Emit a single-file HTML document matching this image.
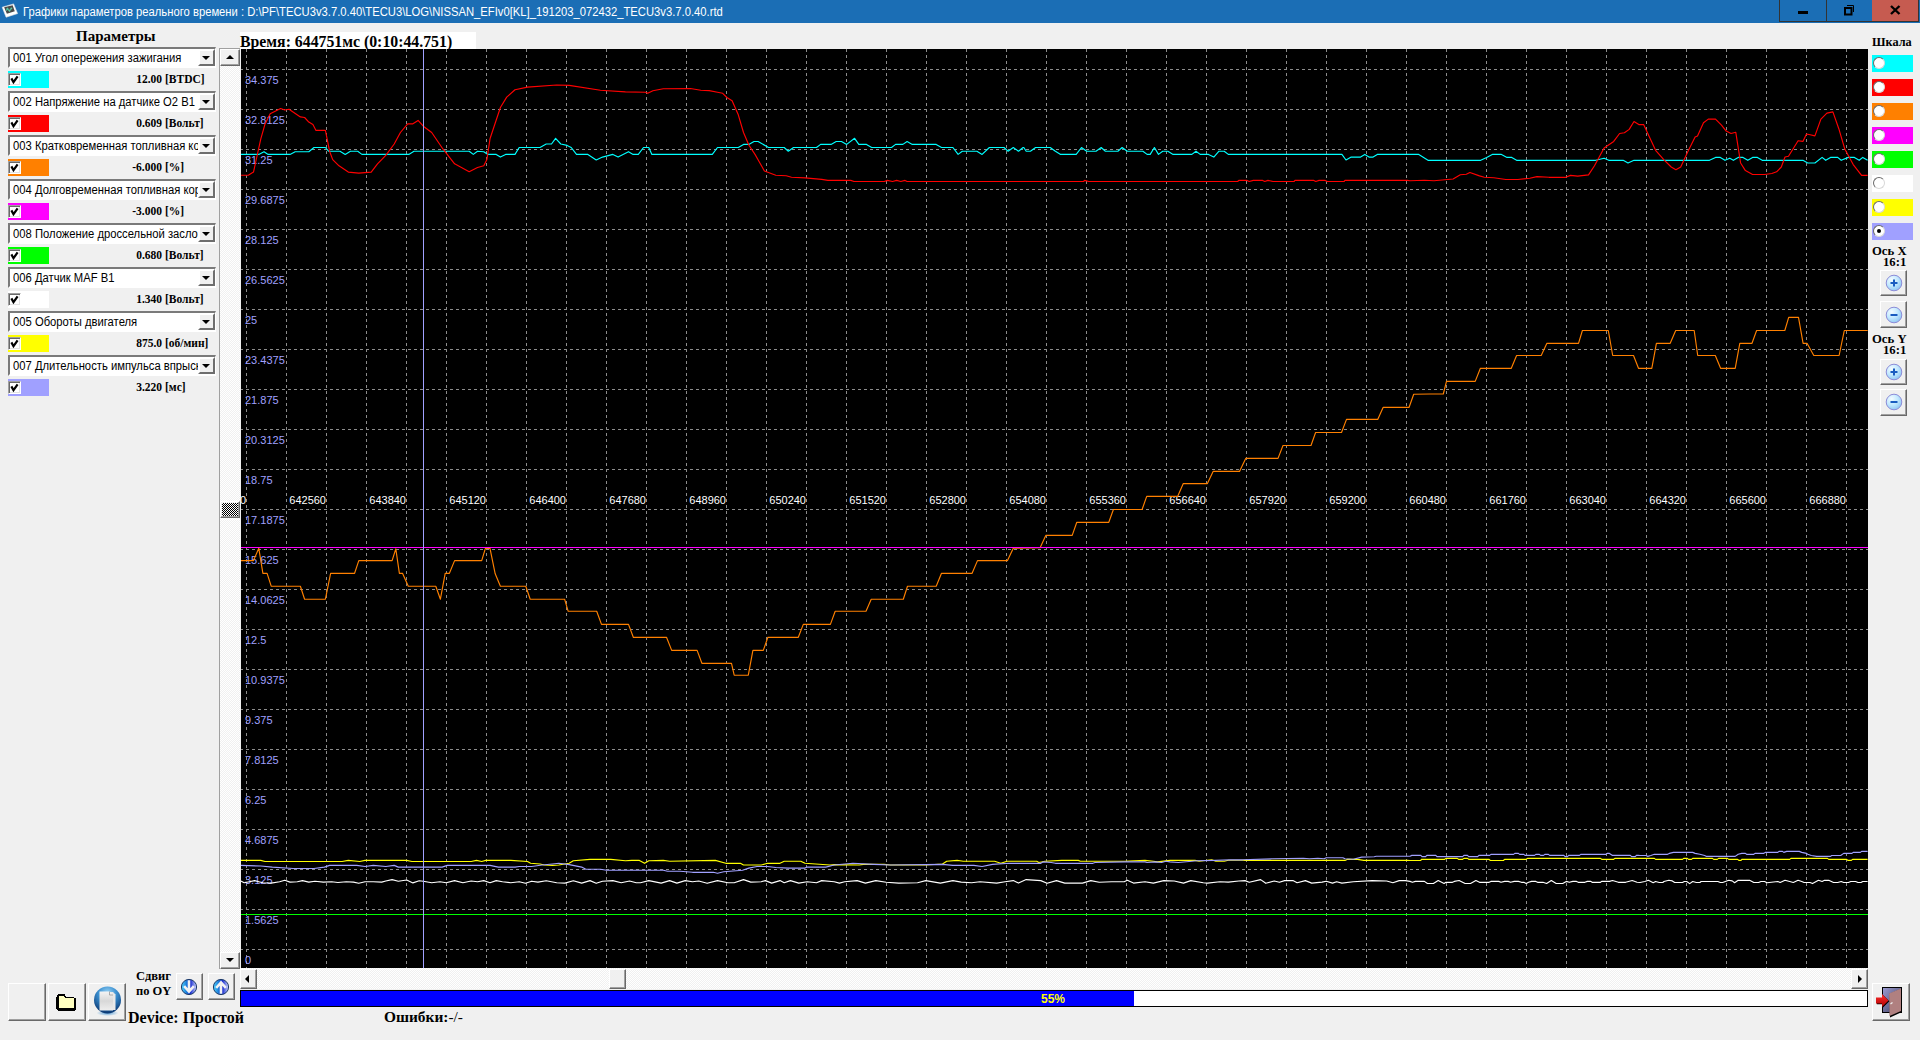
<!DOCTYPE html>
<html><head><meta charset="utf-8">
<style>
*{margin:0;padding:0;box-sizing:border-box}
html,body{width:1920px;height:1040px;overflow:hidden;background:#f0f0f0;position:relative;font-family:"Liberation Sans",sans-serif}
.a{position:absolute}
.t{position:absolute;white-space:nowrap;line-height:1}
.serif{font-family:"Liberation Serif",serif;font-weight:bold;color:#000}
#title{left:0;top:0;width:1920px;height:23px;background:#1b6eb5}
.wb{position:absolute;top:0;height:22px;border:1px solid #333;border-top:none}
.combo{position:absolute;left:8px;width:208px;height:21px;background:#fff;border-top:2px solid #7a7a7a;border-left:2px solid #7a7a7a;border-bottom:2px solid #fff;border-right:1px solid #fff;overflow:hidden}
.combo span{position:absolute;left:3px;top:2.5px;font-size:12px;line-height:13px;color:#000;white-space:nowrap;transform:scaleX(0.937);transform-origin:0 0}
.dd{position:absolute;left:188px;top:0;width:17px;height:17px;background:#f0f0f0;border-left:2px solid #fff;border-top:2px solid #fff;border-right:2px solid #6e6e6e;border-bottom:2px solid #6e6e6e}
.dd:after{content:"";position:absolute;left:2px;top:5px;border-left:4px solid transparent;border-right:4px solid transparent;border-top:4px solid #000}
.sw{position:absolute;left:8px;width:41px;height:17px}
.cb{position:absolute;left:8px;width:13px;height:13px;background:#fff;border-top:1px solid #a0a0a0;border-left:1px solid #a0a0a0;border-right:1px solid #fff;border-bottom:1px solid #fff;box-shadow:inset 1px 1px 0 #696969,inset -1px -1px 0 #e3e3e3}
.val{position:absolute;font-family:"Liberation Serif",serif;font-weight:bold;font-size:11.5px;line-height:1;white-space:nowrap;color:#000}
.btn{position:absolute;background:#f0f0f0;border-top:1px solid #fff;border-left:1px solid #fff;border-right:1px solid #696969;border-bottom:1px solid #696969;box-shadow:inset -1px -1px 0 #a0a0a0}
.track{background:repeating-conic-gradient(#f0f0f0 0 25%,#fff 0 50%) 0 0/2px 2px}
.rsw{position:absolute;left:1872px;width:41px;height:17px}
.rad{position:absolute;left:1px;top:2px;width:12px;height:12px;border-radius:50%;background:#fff;border:1.5px solid #6a6a6a;border-right-color:#d8d8d8;border-bottom-color:#d8d8d8}
</style></head><body>
<!-- title bar -->
<div id="title" class="a">
  <svg class="a" style="left:0;top:0" width="22" height="22" viewBox="0 0 22 22">
<path d="M2.2 7.2 L13.6 3.9 L17.6 13.6 L6.1 17.2 Z" fill="#fff" stroke="#e6e6e6" stroke-width="0.6" stroke-linejoin="round"/>
<path d="M4.1 7.3 L12.6 5.2 L14.8 11.2 L6.9 13.7 Z" fill="#4a4a4a"/>
<path d="M6.2 10.6 L7.4 8.6 L9.4 10.8 L11.6 8.2" stroke="#4fb89a" stroke-width="1.2" fill="none"/>
<circle cx="7.4" cy="8.6" r="0.9" fill="#5cc8a8"/><circle cx="9.5" cy="10.6" r="0.9" fill="#5cc8a8"/><circle cx="11.4" cy="8.3" r="0.9" fill="#5cc8a8"/>
</svg>
  <div class="t" style="left:23px;top:6px;font-size:12px;color:#fff;transform:scaleX(0.937);transform-origin:0 0">Графики параметров реального времени : D:\PF\TECU3v3.7.0.40\TECU3\LOG\NISSAN_EFIv0[KL]_191203_072432_TECU3v3.7.0.40.rtd</div>
  <div class="wb" style="left:1779px;width:48px"><div class="a" style="left:18px;top:11px;width:10px;height:3px;background:#000"></div></div>
  <div class="wb" style="left:1826px;width:47px;border-left:none"><svg class="a" style="left:17px;top:5px" width="14" height="12"><rect x="2" y="3" width="6.5" height="6.5" fill="none" stroke="#000" stroke-width="2"/><path d="M4 0.5 H10.5 V7" fill="none" stroke="#000" stroke-width="1"/></svg></div>
  <div class="wb" style="left:1872px;width:47px;background:#c65b50;border-left:none"><svg class="a" style="left:18px;top:5px" width="11" height="10"><path d="M1 1 L9.5 9 M9.5 1 L1 9" stroke="#000" stroke-width="2.4"/></svg></div>
</div>

<!-- left panel -->
<div class="t serif" style="left:76px;top:29px;font-size:15px">Параметры</div>
<div class="combo" style="top:47px"><span>001 Угол опережения зажигания</span><div class="dd"></div></div>
<div class="sw" style="top:71px;background:#00ffff"></div>
<div class="cb" style="top:73px"><svg class="a" style="left:0;top:0" width="11" height="11"><path d="M2.4 4.4 L4.5 8.2 L8.6 2.4" stroke="#000" stroke-width="2.2" fill="none" stroke-linejoin="miter"/></svg></div>
<div class="val" style="top:74px;right:1758px">12.00</div>
<div class="val" style="top:74px;left:165px">[BTDC]</div>
<div class="combo" style="top:91px"><span>002 Напряжение на датчике O2 B1 S</span><div class="dd"></div></div>
<div class="sw" style="top:115px;background:#ff0000"></div>
<div class="cb" style="top:117px"><svg class="a" style="left:0;top:0" width="11" height="11"><path d="M2.4 4.4 L4.5 8.2 L8.6 2.4" stroke="#000" stroke-width="2.2" fill="none" stroke-linejoin="miter"/></svg></div>
<div class="val" style="top:118px;right:1758px">0.609</div>
<div class="val" style="top:118px;left:165px">[Вольт]</div>
<div class="combo" style="top:135px"><span>003 Кратковременная топливная ко</span><div class="dd"></div></div>
<div class="sw" style="top:159px;background:#ff8000"></div>
<div class="cb" style="top:161px"><svg class="a" style="left:0;top:0" width="11" height="11"><path d="M2.4 4.4 L4.5 8.2 L8.6 2.4" stroke="#000" stroke-width="2.2" fill="none" stroke-linejoin="miter"/></svg></div>
<div class="val" style="top:162px;right:1758px">-6.000</div>
<div class="val" style="top:162px;left:165px">[%]</div>
<div class="combo" style="top:179px"><span>004 Долговременная топливная кор</span><div class="dd"></div></div>
<div class="sw" style="top:203px;background:#ff00ff"></div>
<div class="cb" style="top:205px"><svg class="a" style="left:0;top:0" width="11" height="11"><path d="M2.4 4.4 L4.5 8.2 L8.6 2.4" stroke="#000" stroke-width="2.2" fill="none" stroke-linejoin="miter"/></svg></div>
<div class="val" style="top:206px;right:1758px">-3.000</div>
<div class="val" style="top:206px;left:165px">[%]</div>
<div class="combo" style="top:223px"><span>008 Положение дроссельной заслон</span><div class="dd"></div></div>
<div class="sw" style="top:247px;background:#00ff00"></div>
<div class="cb" style="top:249px"><svg class="a" style="left:0;top:0" width="11" height="11"><path d="M2.4 4.4 L4.5 8.2 L8.6 2.4" stroke="#000" stroke-width="2.2" fill="none" stroke-linejoin="miter"/></svg></div>
<div class="val" style="top:250px;right:1758px">0.680</div>
<div class="val" style="top:250px;left:165px">[Вольт]</div>
<div class="combo" style="top:267px"><span>006 Датчик MAF B1</span><div class="dd"></div></div>
<div class="sw" style="top:291px;background:#ffffff"></div>
<div class="cb" style="top:293px"><svg class="a" style="left:0;top:0" width="11" height="11"><path d="M2.4 4.4 L4.5 8.2 L8.6 2.4" stroke="#000" stroke-width="2.2" fill="none" stroke-linejoin="miter"/></svg></div>
<div class="val" style="top:294px;right:1758px">1.340</div>
<div class="val" style="top:294px;left:165px">[Вольт]</div>
<div class="combo" style="top:311px"><span>005 Обороты двигателя</span><div class="dd"></div></div>
<div class="sw" style="top:335px;background:#ffff00"></div>
<div class="cb" style="top:337px"><svg class="a" style="left:0;top:0" width="11" height="11"><path d="M2.4 4.4 L4.5 8.2 L8.6 2.4" stroke="#000" stroke-width="2.2" fill="none" stroke-linejoin="miter"/></svg></div>
<div class="val" style="top:338px;right:1758px">875.0</div>
<div class="val" style="top:338px;left:165px">[об/мин]</div>
<div class="combo" style="top:355px"><span>007 Длительность импульса впрыск</span><div class="dd"></div></div>
<div class="sw" style="top:379px;background:#a0a0ff"></div>
<div class="cb" style="top:381px"><svg class="a" style="left:0;top:0" width="11" height="11"><path d="M2.4 4.4 L4.5 8.2 L8.6 2.4" stroke="#000" stroke-width="2.2" fill="none" stroke-linejoin="miter"/></svg></div>
<div class="val" style="top:382px;right:1758px">3.220</div>
<div class="val" style="top:382px;left:165px">[мс]</div>

<!-- vertical scrollbar -->
<div class="a track" style="left:219px;top:48px;width:21px;height:921px;border-left:1px solid #a0a0a0"></div>
<div class="a" style="left:219px;top:48px;width:21px;height:1px;background:#a0a0a0"></div><div class="btn" style="left:220px;top:49px;width:20px;height:17px"><div class="a" style="left:5px;top:5px;border-left:4px solid transparent;border-right:4px solid transparent;border-bottom:4px solid #000"></div></div>
<div class="btn" style="left:220px;top:952px;width:20px;height:17px"><div class="a" style="left:5px;top:5px;border-left:4px solid transparent;border-right:4px solid transparent;border-top:4px solid #000"></div></div>
<div class="btn" style="left:220px;top:501px;width:20px;height:17px"><div class="a" style="left:1px;top:1px;width:16px;height:13px;background:repeating-conic-gradient(#000 0 25%,#fff 0 50%) 0 0/2px 2px"></div></div>

<!-- time label -->
<div class="a" style="left:240px;top:32px;width:236px;height:17px;background:#fff"></div>
<div class="t serif" style="left:240px;top:34px;font-size:15.8px">Время: 644751мс (0:10:44.751)</div>

<!-- chart -->
<div class="a" style="left:241px;top:49px;width:1627px;height:919px;background:#000"></div>
<svg class="a" style="left:0;top:0" width="1920" height="1040" shape-rendering="crispEdges">
<defs><clipPath id="cl"><rect x="241" y="49" width="1627" height="919"/></clipPath></defs>
<g clip-path="url(#cl)">
<path d="M240 69.5H1868M240 109.5H1868M240 149.5H1868M240 189.5H1868M240 229.5H1868M240 269.5H1868M240 309.5H1868M240 349.5H1868M240 389.5H1868M240 429.5H1868M240 469.5H1868M240 509.5H1868M240 549.5H1868M240 589.5H1868M240 629.5H1868M240 669.5H1868M240 709.5H1868M240 749.5H1868M240 789.5H1868M240 829.5H1868M240 869.5H1868M240 909.5H1868M240 949.5H1868" stroke="#8c8c8c" stroke-width="1" stroke-dasharray="3 3" fill="none"/>
<path d="M246.5 49V968M286.5 49V968M326.5 49V968M366.5 49V968M406.5 49V968M446.5 49V968M486.5 49V968M526.5 49V968M566.5 49V968M606.5 49V968M646.5 49V968M686.5 49V968M726.5 49V968M766.5 49V968M806.5 49V968M846.5 49V968M886.5 49V968M926.5 49V968M966.5 49V968M1006.5 49V968M1046.5 49V968M1086.5 49V968M1126.5 49V968M1166.5 49V968M1206.5 49V968M1246.5 49V968M1286.5 49V968M1326.5 49V968M1366.5 49V968M1406.5 49V968M1446.5 49V968M1486.5 49V968M1526.5 49V968M1566.5 49V968M1606.5 49V968M1646.5 49V968M1686.5 49V968M1726.5 49V968M1766.5 49V968M1806.5 49V968M1846.5 49V968" stroke="#8c8c8c" stroke-width="1" stroke-dasharray="3 3" fill="none"/>
<text x="245" y="83.5" fill="#a0a0ff" font-size="11" font-family="Liberation Sans">34.375</text>
<text x="245" y="123.5" fill="#a0a0ff" font-size="11" font-family="Liberation Sans">32.8125</text>
<text x="245" y="163.5" fill="#a0a0ff" font-size="11" font-family="Liberation Sans">31.25</text>
<text x="245" y="203.5" fill="#a0a0ff" font-size="11" font-family="Liberation Sans">29.6875</text>
<text x="245" y="243.5" fill="#a0a0ff" font-size="11" font-family="Liberation Sans">28.125</text>
<text x="245" y="283.5" fill="#a0a0ff" font-size="11" font-family="Liberation Sans">26.5625</text>
<text x="245" y="323.5" fill="#a0a0ff" font-size="11" font-family="Liberation Sans">25</text>
<text x="245" y="363.5" fill="#a0a0ff" font-size="11" font-family="Liberation Sans">23.4375</text>
<text x="245" y="403.5" fill="#a0a0ff" font-size="11" font-family="Liberation Sans">21.875</text>
<text x="245" y="443.5" fill="#a0a0ff" font-size="11" font-family="Liberation Sans">20.3125</text>
<text x="245" y="483.5" fill="#a0a0ff" font-size="11" font-family="Liberation Sans">18.75</text>
<text x="245" y="523.5" fill="#a0a0ff" font-size="11" font-family="Liberation Sans">17.1875</text>
<text x="245" y="563.5" fill="#a0a0ff" font-size="11" font-family="Liberation Sans">15.625</text>
<text x="245" y="603.5" fill="#a0a0ff" font-size="11" font-family="Liberation Sans">14.0625</text>
<text x="245" y="643.5" fill="#a0a0ff" font-size="11" font-family="Liberation Sans">12.5</text>
<text x="245" y="683.5" fill="#a0a0ff" font-size="11" font-family="Liberation Sans">10.9375</text>
<text x="245" y="723.5" fill="#a0a0ff" font-size="11" font-family="Liberation Sans">9.375</text>
<text x="245" y="763.5" fill="#a0a0ff" font-size="11" font-family="Liberation Sans">7.8125</text>
<text x="245" y="803.5" fill="#a0a0ff" font-size="11" font-family="Liberation Sans">6.25</text>
<text x="245" y="843.5" fill="#a0a0ff" font-size="11" font-family="Liberation Sans">4.6875</text>
<text x="245" y="883.5" fill="#a0a0ff" font-size="11" font-family="Liberation Sans">3.125</text>
<text x="245" y="923.5" fill="#a0a0ff" font-size="11" font-family="Liberation Sans">1.5625</text>
<text x="245" y="963.5" fill="#a0a0ff" font-size="11" font-family="Liberation Sans">0</text>
<text x="246" y="503.5" fill="#fff" font-size="11" font-family="Liberation Sans" text-anchor="end">0</text>
<text x="326" y="503.5" fill="#fff" font-size="11" font-family="Liberation Sans" text-anchor="end">642560</text>
<text x="406" y="503.5" fill="#fff" font-size="11" font-family="Liberation Sans" text-anchor="end">643840</text>
<text x="486" y="503.5" fill="#fff" font-size="11" font-family="Liberation Sans" text-anchor="end">645120</text>
<text x="566" y="503.5" fill="#fff" font-size="11" font-family="Liberation Sans" text-anchor="end">646400</text>
<text x="646" y="503.5" fill="#fff" font-size="11" font-family="Liberation Sans" text-anchor="end">647680</text>
<text x="726" y="503.5" fill="#fff" font-size="11" font-family="Liberation Sans" text-anchor="end">648960</text>
<text x="806" y="503.5" fill="#fff" font-size="11" font-family="Liberation Sans" text-anchor="end">650240</text>
<text x="886" y="503.5" fill="#fff" font-size="11" font-family="Liberation Sans" text-anchor="end">651520</text>
<text x="966" y="503.5" fill="#fff" font-size="11" font-family="Liberation Sans" text-anchor="end">652800</text>
<text x="1046" y="503.5" fill="#fff" font-size="11" font-family="Liberation Sans" text-anchor="end">654080</text>
<text x="1126" y="503.5" fill="#fff" font-size="11" font-family="Liberation Sans" text-anchor="end">655360</text>
<text x="1206" y="503.5" fill="#fff" font-size="11" font-family="Liberation Sans" text-anchor="end">656640</text>
<text x="1286" y="503.5" fill="#fff" font-size="11" font-family="Liberation Sans" text-anchor="end">657920</text>
<text x="1366" y="503.5" fill="#fff" font-size="11" font-family="Liberation Sans" text-anchor="end">659200</text>
<text x="1446" y="503.5" fill="#fff" font-size="11" font-family="Liberation Sans" text-anchor="end">660480</text>
<text x="1526" y="503.5" fill="#fff" font-size="11" font-family="Liberation Sans" text-anchor="end">661760</text>
<text x="1606" y="503.5" fill="#fff" font-size="11" font-family="Liberation Sans" text-anchor="end">663040</text>
<text x="1686" y="503.5" fill="#fff" font-size="11" font-family="Liberation Sans" text-anchor="end">664320</text>
<text x="1766" y="503.5" fill="#fff" font-size="11" font-family="Liberation Sans" text-anchor="end">665600</text>
<text x="1846" y="503.5" fill="#fff" font-size="11" font-family="Liberation Sans" text-anchor="end">666880</text>
<g shape-rendering="geometricPrecision"><polyline points="241.0,154.4 258.8,154.4 264.0,151.7 268.1,154.4 290.0,154.4 295.2,151.7 308.8,151.7 314.0,147.5 325.4,147.5 328.5,151.2 340.0,151.2 345.2,154.4 350.4,151.2 357.7,151.2 361.9,154.4 408.8,154.4 414.0,151.2 469.2,151.2 473.3,154.4 477.5,151.2 483.8,151.7 487.9,154.4 496.2,154.4 500.4,157.1 505.6,154.4 515.0,154.4 519.2,147.5 540.0,147.5 546.2,144.0 551.5,144.0 555.6,138.3 560.8,144.0 567.1,145.4 571.2,147.5 576.5,154.4 587.9,154.4 596.2,160.0 602.5,157.1 612.9,154.4 618.1,157.1 628.5,151.7 633.1,154.4 633.8,154.4 638.3,154.4 643.5,147.5 648.8,147.5 651.9,154.4 712.3,154.4 717.5,147.5 738.3,147.5 743.5,144.4 748.8,144.4 754.0,141.5 758.1,141.5 768.5,147.5 784.2,147.5 788.3,151.2 793.5,147.5 816.5,147.5 820.6,144.4 831.0,144.4 836.2,141.5 841.5,141.5 846.7,144.4 854.6,138.3 858.8,144.4 866.5,144.4 871.7,147.5 891.5,147.5 895.6,144.4 902.9,144.4 907.1,141.5 912.3,144.4 936.2,144.4 941.5,147.5 952.9,147.5 958.1,154.4 962.3,151.2 976.9,151.2 982.1,154.4 989.4,147.5 1004.0,147.5 1008.1,151.2 1013.3,147.5 1018.5,151.2 1023.1,147.5 1023.8,147.5 1026.2,151.2 1026.9,151.2 1030.4,151.2 1035.6,147.5 1050.2,147.5 1055.4,151.2 1060.6,154.4 1076.2,154.4 1081.5,147.5 1086.7,151.2 1096.0,151.2 1101.2,147.5 1105.4,151.2 1117.9,151.2 1122.1,147.5 1127.3,151.2 1142.9,151.2 1147.1,154.4 1150.2,154.4 1154.4,147.5 1158.5,154.4 1162.7,151.2 1167.9,151.2 1173.1,154.4 1191.9,154.4 1196.0,151.2 1200.2,154.4 1208.5,154.4 1213.8,157.1 1219.0,151.2 1224.2,151.2 1228.3,154.4 1341.9,154.4 1346.0,160.0 1351.2,157.1 1360.6,157.1 1364.8,154.4 1369.0,157.1 1373.1,157.1 1377.3,154.4 1407.5,154.4 1410.0,154.3 1418.4,154.3 1428.0,160.3 1480.7,160.3 1486.7,157.4 1492.7,154.3 1501.0,154.3 1507.0,157.4 1511.8,157.4 1516.6,160.3 1595.7,160.3 1604.1,158.2 1608.8,160.3 1623.2,160.3 1628.0,163.0 1634.0,160.3 1709.5,160.3 1715.5,157.4 1720.3,157.4 1725.0,160.3 1729.8,158.2 1733.4,160.3 1738.2,157.4 1743.0,157.4 1747.8,160.3 1752.6,157.4 1757.4,157.4 1762.2,160.3 1802.9,160.3 1807.7,163.0 1814.9,163.0 1822.1,157.4 1825.7,160.3 1830.5,157.4 1837.7,157.4 1841.2,160.3 1848.4,157.4 1854.4,157.4 1859.2,160.3 1862.8,157.4 1867.6,160.3" fill="none" stroke="#00ffff" stroke-width="1.15" stroke-linejoin="round"/>
<polyline points="241.0,175.2 248.3,175.2 253.5,172.1 256.7,157.5 260.8,138.8 265.0,124.2 270.2,113.8 280.6,108.5 284.8,110.0 289.0,109.2 300.4,116.9 304.6,117.5 308.8,122.1 312.9,124.6 316.0,130.4 325.4,130.4 329.6,151.2 332.7,159.6 339.0,165.8 348.3,172.1 358.8,173.1 371.2,172.1 377.5,163.8 385.8,155.4 394.2,144.0 400.4,132.5 407.7,123.8 412.9,123.8 418.1,120.4 423.3,126.2 431.7,132.5 443.1,149.2 454.6,163.8 469.2,171.7 477.5,167.5 483.8,165.8 486.9,159.6 490.0,138.8 500.4,107.5 506.7,97.1 515.0,89.8 527.5,87.1 556.7,85.0 569.2,85.4 600.4,90.2 625.4,91.9 645.6,92.3 647.7,93.3 652.9,90.8 663.3,88.8 690.4,88.5 700.8,90.2 709.2,90.6 717.5,92.3 722.7,93.3 726.9,97.5 732.1,100.8 738.3,114.8 743.5,132.5 748.8,145.0 755.0,154.4 759.2,161.7 764.4,171.0 775.8,175.2 786.2,175.8 791.5,177.3 805.0,177.9 821.7,179.4 827.9,180.4 850.8,180.4 854.0,181.5 884.2,181.5 887.3,180.4 892.5,181.5 896.7,180.4 900.8,181.5 905.0,180.4 907.1,181.5 1019.6,181.5 1083.5,181.5 1084.6,180.4 1088.8,181.5 1237.7,181.5 1238.8,180.4 1247.1,180.4 1249.2,181.5 1253.3,180.4 1262.7,180.4 1264.8,181.5 1267.9,180.4 1273.1,181.5 1294.0,181.5 1295.0,180.4 1313.8,180.4 1315.8,181.5 1319.0,180.4 1325.2,180.4 1327.3,181.5 1344.0,181.5 1345.0,180.4 1407.5,180.4 1410.0,180.7 1424.4,180.2 1434.0,180.7 1453.1,179.0 1460.3,174.7 1466.3,174.2 1469.9,172.5 1479.5,175.9 1484.3,177.3 1493.8,177.8 1505.8,179.5 1517.8,179.5 1529.8,178.3 1537.0,176.6 1549.0,177.3 1565.7,177.3 1570.5,175.4 1577.7,176.1 1588.5,174.9 1594.5,165.8 1604.1,147.9 1613.7,141.4 1619.6,133.5 1624.4,132.8 1629.2,129.4 1634.0,121.5 1638.8,124.6 1643.6,124.6 1655.6,150.3 1664.0,159.8 1671.2,167.0 1675.9,169.7 1680.7,167.0 1687.9,151.5 1695.1,137.1 1697.5,135.9 1703.5,122.7 1708.3,119.1 1715.5,119.1 1721.5,125.1 1726.2,131.1 1731.0,133.5 1735.8,132.3 1740.6,163.0 1745.4,170.6 1752.6,174.5 1764.6,174.5 1771.8,173.5 1776.6,171.8 1781.3,167.0 1785.0,157.0 1788.5,156.2 1798.1,140.7 1802.9,141.4 1806.5,134.0 1810.1,134.7 1814.9,135.9 1820.9,119.1 1826.9,113.1 1832.9,111.9 1838.8,128.7 1844.8,149.1 1853.2,164.6 1861.6,175.4 1867.6,175.4" fill="none" stroke="#ff0000" stroke-width="1.15" stroke-linejoin="round"/>
<polyline points="240.0,560.6 253.5,560.6 258.8,548.3 262.9,573.3 267.1,573.3 271.2,586.2 300.4,586.2 304.6,599.2 325.4,599.2 330.6,573.3 354.6,573.3 358.8,560.6 392.1,560.6 395.8,548.8 399.4,573.3 402.5,573.3 408.3,586.2 435.8,586.2 440.4,599.2 445.2,573.3 449.4,573.3 454.6,560.6 481.7,560.6 485.4,548.3 490.0,548.3 495.2,573.8 500.4,586.2 525.8,586.2 530.2,599.2 564.6,599.2 568.1,611.2 596.7,611.2 601.5,624.4 628.5,624.4 633.3,637.3 633.8,637.3 666.5,637.3 671.7,650.4 697.1,650.4 701.9,663.3 731.5,663.3 734.2,675.2 748.3,675.2 752.9,650.4 763.3,650.4 767.9,637.3 798.3,637.3 803.3,624.4 830.4,624.4 835.2,611.2 866.0,611.2 871.2,599.2 903.3,599.2 907.5,586.2 936.2,586.2 941.5,573.3 972.1,573.3 977.5,560.6 1007.5,560.6 1013.3,548.3 1040.1,547.8 1045.8,535.4 1072.2,535.4 1076.8,522.3 1108.8,522.3 1113.4,509.5 1142.1,509.5 1146.7,496.4 1177.6,496.4 1183.3,483.6 1207.4,483.6 1213.1,471.4 1239.5,471.4 1245.7,458.4 1278.0,458.4 1283.0,445.5 1311.0,445.5 1315.6,432.5 1341.5,432.5 1346.5,419.4 1377.7,419.4 1383.2,407.3 1409.1,407.3 1413.7,394.2 1430.0,394.0 1443.3,394.0 1446.5,381.4 1475.2,381.4 1480.4,368.3 1511.3,368.3 1516.6,355.5 1541.2,355.5 1546.9,343.3 1578.5,343.3 1582.4,330.5 1608.3,330.5 1612.7,355.5 1633.5,355.5 1638.5,368.3 1651.8,368.3 1656.4,343.3 1670.2,343.3 1675.7,330.5 1694.2,330.5 1697.7,355.5 1715.3,355.5 1720.6,368.3 1735.2,368.3 1739.8,343.3 1752.0,343.3 1756.6,330.5 1784.8,330.5 1788.7,317.4 1798.5,317.4 1803.1,343.3 1807.0,343.3 1813.8,355.5 1839.1,355.5 1844.3,330.5 1867.7,330.5" fill="none" stroke="#ff8000" stroke-width="1.15" stroke-linejoin="round"/>
<path d="M241 547.5H1868" stroke="#ff00ff" stroke-width="1.2" shape-rendering="crispEdges"/>
<path d="M241 914.5H1868" stroke="#00ff00" stroke-width="1" shape-rendering="crispEdges"/>
<polyline points="240.0,880.6 244.2,882.7 249.4,881.7 254.6,880.6 258.8,881.7 262.9,882.7 271.2,883.1 279.6,881.7 284.8,880.2 290.0,882.1 297.3,881.7 302.5,880.6 308.8,882.1 315.0,881.2 323.3,882.1 331.7,881.7 337.9,882.5 346.2,881.7 353.5,882.1 358.8,883.3 365.0,881.7 373.3,881.7 381.7,882.1 385.8,881.0 392.1,879.6 398.3,881.2 406.7,880.0 412.9,882.9 419.2,880.8 423.3,881.2 431.7,882.7 440.0,881.7 446.2,882.7 454.6,880.6 462.9,882.7 471.2,881.0 477.5,881.7 483.8,880.6 490.0,882.7 496.2,880.6 502.5,881.7 510.8,882.7 519.2,881.7 525.4,883.3 531.7,881.2 537.9,882.1 546.2,880.8 556.7,882.7 565.0,883.1 573.3,880.8 581.7,883.1 590.0,880.6 596.2,883.3 602.5,881.2 612.9,880.6 621.2,882.7 629.6,881.0 636.2,882.7 640.4,882.7 648.8,880.6 661.2,883.1 669.6,880.6 676.9,883.1 685.2,880.6 692.5,881.7 698.8,881.0 707.1,883.3 717.5,880.6 727.9,882.7 734.2,882.7 743.5,879.6 750.8,882.1 761.2,881.7 765.4,880.6 771.7,883.1 780.0,880.6 784.2,882.7 790.4,880.6 798.8,883.1 807.1,881.7 816.5,882.7 821.7,880.6 834.2,881.7 839.4,883.1 844.6,881.7 857.1,880.6 865.4,883.1 875.8,880.6 886.2,882.3 898.8,883.1 917.5,882.7 925.8,880.6 940.4,883.1 952.9,880.6 961.2,882.1 971.7,882.7 980.0,881.7 996.7,883.1 1005.0,881.7 1013.3,880.6 1018.5,883.1 1026.2,879.6 1040.8,880.6 1047.1,883.3 1056.5,880.6 1064.8,883.1 1082.5,883.1 1090.8,880.6 1099.2,882.3 1111.7,881.7 1124.2,881.7 1127.3,880.2 1133.5,883.1 1145.0,881.7 1153.3,883.1 1163.8,880.6 1174.2,881.0 1183.5,883.1 1190.8,880.6 1203.3,882.7 1207.5,883.1 1220.0,881.7 1228.3,882.1 1238.8,881.0 1245.0,880.6 1249.2,882.3 1260.6,879.6 1265.8,883.3 1274.2,881.0 1279.4,882.3 1284.6,880.6 1292.9,880.6 1297.1,882.7 1305.4,880.6 1311.7,883.1 1322.1,882.1 1326.2,881.2 1332.5,883.1 1336.7,881.7 1341.9,883.1 1353.3,881.7 1372.1,880.6 1386.7,881.0 1392.9,882.7 1399.2,880.6 1405.4,880.6 1410.0,881.4 1412.4,882.3 1415.4,881.4 1424.4,881.4 1427.4,883.5 1433.4,883.5 1438.2,880.5 1444.1,883.5 1445.9,882.3 1452.5,882.3 1454.3,881.4 1459.1,880.5 1465.1,883.5 1470.5,883.5 1475.9,880.5 1479.5,882.3 1489.1,882.3 1490.9,881.4 1498.7,881.4 1501.0,882.3 1504.6,881.4 1508.2,881.4 1510.6,882.3 1514.2,881.4 1518.4,881.4 1521.4,882.3 1523.8,882.3 1526.2,883.5 1528.6,882.3 1531.6,881.4 1535.8,881.4 1537.6,882.3 1543.0,882.3 1546.6,883.5 1551.3,880.5 1556.2,883.5 1562.7,883.5 1566.3,881.4 1569.3,882.3 1572.9,881.4 1576.5,881.4 1578.3,882.3 1584.9,882.3 1587.3,881.4 1590.9,881.4 1592.1,882.3 1600.5,882.3 1601.7,881.4 1609.5,881.4 1612.5,880.5 1618.4,882.3 1625.6,882.3 1632.2,880.5 1637.0,882.3 1640.0,882.5 1644.8,881.5 1648.4,880.3 1653.2,882.7 1655.6,881.5 1659.2,882.5 1662.8,882.5 1664.0,881.5 1668.8,880.3 1672.3,880.9 1674.7,882.5 1682.5,882.5 1684.3,881.5 1686.7,881.5 1689.7,883.6 1692.7,881.5 1696.3,882.5 1699.9,882.5 1701.1,881.5 1717.9,881.5 1720.3,882.5 1722.7,882.5 1728.7,880.3 1732.2,880.9 1734.6,882.7 1738.2,880.3 1749.6,880.3 1753.8,882.5 1758.6,882.5 1761.0,881.5 1764.6,881.5 1767.0,882.7 1777.8,881.5 1780.2,882.5 1785.0,880.3 1789.7,881.5 1793.3,882.5 1798.1,880.3 1801.7,881.5 1804.1,882.5 1810.1,882.5 1812.5,883.6 1818.5,880.3 1822.1,881.5 1824.5,880.3 1828.7,880.3 1833.5,882.5 1837.7,882.5 1841.2,881.5 1843.7,882.5 1848.4,882.5 1850.8,881.5 1855.6,881.5 1858.0,882.5 1861.0,882.5 1862.8,881.5 1867.6,881.5" fill="none" stroke="#ffffff" stroke-width="1.15" stroke-linejoin="round"/>
<polyline points="240.0,860.4 260.8,860.4 265.0,861.5 293.1,861.5 342.1,861.5 348.3,860.4 359.8,861.5 365.0,860.4 406.7,860.4 411.9,861.5 471.2,861.5 476.5,860.4 481.7,861.5 485.8,860.4 510.8,860.4 527.5,861.5 530.6,863.3 540.0,864.0 544.2,865.0 552.5,865.4 558.8,865.0 569.2,863.3 573.3,860.8 590.0,859.4 610.8,859.4 625.4,860.8 631.7,860.4 639.4,860.4 644.6,863.3 648.8,860.8 663.3,860.4 669.6,861.2 715.4,860.4 725.8,863.3 740.4,863.3 743.5,865.0 761.2,865.0 767.5,863.3 780.0,863.3 784.2,861.2 800.8,861.2 805.0,863.3 830.0,865.0 834.2,864.6 859.2,865.0 863.3,864.4 884.2,864.4 890.4,865.0 925.8,865.0 942.5,864.0 946.7,861.2 957.1,860.4 963.3,861.2 994.6,861.2 1000.8,863.3 1007.1,861.2 1019.6,861.2 1036.7,861.2 1038.8,862.5 1045.0,861.2 1061.7,860.4 1078.3,860.4 1080.4,861.2 1124.2,861.2 1145.0,860.4 1153.3,861.2 1157.5,861.9 1170.0,860.4 1195.0,860.4 1199.2,861.2 1211.7,859.8 1215.8,861.2 1224.2,861.2 1228.3,860.2 1242.9,860.2 1245.0,860.4 1345.0,860.4 1347.1,859.4 1357.5,859.4 1363.8,860.4 1407.5,860.4 1410.0,860.5 1420.8,860.5 1421.4,859.3 1444.7,859.3 1445.9,858.4 1457.3,858.4 1458.5,859.3 1462.7,859.3 1463.9,858.4 1467.5,858.4 1468.7,859.3 1489.1,859.3 1490.3,860.5 1503.4,860.5 1504.6,859.3 1526.2,859.3 1527.4,858.4 1600.5,858.4 1601.7,859.3 1613.7,859.3 1614.8,858.4 1638.2,858.4 1640.0,858.4 1654.4,858.4 1655.6,859.4 1682.5,859.4 1683.7,858.4 1687.3,858.4 1688.5,859.4 1691.5,859.4 1692.7,858.4 1712.5,858.4 1713.7,859.4 1717.3,859.4 1718.5,858.4 1727.5,858.4 1728.7,859.4 1737.6,859.4 1738.8,860.3 1741.2,860.3 1741.8,859.4 1789.7,859.4 1790.9,858.4 1827.5,858.4 1828.7,859.4 1846.6,859.4 1847.8,860.3 1851.4,860.3 1852.6,859.4 1867.6,859.4" fill="none" stroke="#ffff00" stroke-width="1.15" stroke-linejoin="round"/>
<polyline points="240.0,865.4 260.8,866.0 272.3,867.1 293.1,868.5 314.0,868.5 324.4,867.1 329.6,865.4 356.7,865.4 365.0,866.5 373.3,865.4 385.8,866.5 394.2,865.4 398.3,867.1 442.1,867.1 447.3,865.4 490.0,865.4 498.3,867.1 515.0,867.1 519.2,866.5 531.7,866.5 542.1,865.0 552.5,864.0 558.8,863.3 569.2,864.6 581.7,867.1 585.8,869.2 600.4,869.2 606.7,870.2 629.6,870.2 663.3,870.2 667.5,871.2 680.0,871.2 692.5,872.3 713.3,872.3 717.5,873.3 723.8,871.7 742.5,870.2 748.8,868.1 757.1,866.5 767.5,866.5 775.8,867.5 788.3,868.1 805.0,868.1 807.1,867.1 825.8,867.1 834.2,865.0 852.9,863.3 873.8,864.4 890.4,865.0 942.5,864.4 952.9,865.4 973.8,865.4 982.1,866.5 992.5,864.4 1009.2,863.3 1019.6,863.3 1040.8,863.3 1042.9,861.9 1051.2,862.5 1055.4,863.3 1063.8,863.3 1092.9,863.3 1095.0,862.5 1124.2,861.9 1145.0,861.9 1147.1,862.5 1155.4,861.9 1161.7,862.5 1165.8,861.2 1170.0,861.9 1178.3,862.5 1197.1,860.8 1215.8,860.4 1230.4,859.8 1242.9,859.8 1272.1,858.8 1303.3,858.3 1309.6,858.8 1317.9,858.3 1324.2,858.8 1326.2,857.7 1342.9,857.7 1345.0,858.8 1353.3,859.2 1361.7,857.1 1374.2,856.7 1376.2,856.2 1409.6,856.2 1410.0,856.2 1411.8,855.4 1420.8,855.4 1422.0,856.6 1425.6,856.6 1426.8,855.4 1435.8,855.4 1437.0,856.6 1462.7,856.6 1463.9,855.4 1467.5,855.4 1468.7,856.6 1477.7,856.6 1478.9,855.4 1489.7,855.4 1490.9,854.4 1513.6,854.4 1514.8,853.4 1518.4,853.4 1519.6,854.4 1523.8,854.4 1525.0,855.4 1534.6,855.4 1535.8,854.4 1539.4,854.4 1540.6,855.4 1543.6,855.4 1544.8,854.4 1548.4,854.4 1549.6,855.4 1563.9,855.4 1565.1,856.6 1567.5,856.6 1568.7,855.4 1579.5,855.4 1580.7,854.4 1605.9,854.4 1607.1,853.4 1609.5,853.4 1612.5,855.4 1630.4,855.4 1631.6,856.6 1635.2,856.6 1636.4,855.4 1638.2,855.4 1640.0,855.5 1646.0,855.5 1647.8,856.4 1650.8,855.5 1654.4,854.3 1667.5,854.3 1669.3,853.4 1673.5,852.4 1692.7,852.4 1695.1,853.4 1699.9,854.3 1704.7,855.5 1706.5,856.4 1735.2,856.4 1738.2,854.3 1741.8,853.4 1745.4,853.4 1746.6,854.3 1753.8,854.3 1755.0,853.4 1763.4,853.4 1765.2,852.4 1777.8,852.4 1779.0,851.4 1782.5,851.4 1783.8,852.4 1786.7,851.4 1799.3,851.4 1801.7,852.4 1806.5,853.4 1807.7,854.3 1811.3,855.5 1816.7,856.4 1830.5,856.4 1831.7,855.5 1840.7,855.5 1843.7,853.4 1852.0,853.4 1853.2,852.4 1860.4,852.4 1861.6,851.4 1867.6,851.4" fill="none" stroke="#a0a0ff" stroke-width="1.15" stroke-linejoin="round"/></g>
<path d="M423.5 49V968" stroke="#a0a0ff" stroke-width="1"/>
</g></svg>

<!-- right panel -->
<div class="t serif" style="left:1872px;top:36px;font-size:12.3px">Шкала</div>
<div class="rsw" style="top:55px;background:#00ffff"><div class="rad"></div></div>
<div class="rsw" style="top:79px;background:#ff0000"><div class="rad"></div></div>
<div class="rsw" style="top:103px;background:#ff8000"><div class="rad"></div></div>
<div class="rsw" style="top:127px;background:#ff00ff"><div class="rad"></div></div>
<div class="rsw" style="top:151px;background:#00ff00"><div class="rad"></div></div>
<div class="rsw" style="top:175px;background:#ffffff"><div class="rad"></div></div>
<div class="rsw" style="top:199px;background:#ffff00"><div class="rad"></div></div>
<div class="rsw" style="top:223px;background:#a0a0ff"><div class="rad"><div class="a" style="left:2.5px;top:2.5px;width:4px;height:4px;border-radius:50%;background:#000"></div></div></div>
<div class="t serif" style="left:1872px;top:245px;font-size:12.7px">Ось X</div>
<div class="t serif" style="left:1883px;top:256px;font-size:12.7px">16:1</div>
<div class="t serif" style="left:1872px;top:333px;font-size:12.7px">Ось Y</div>
<div class="t serif" style="left:1883px;top:344px;font-size:12.7px">16:1</div>
<div class="btn" style="left:1880px;top:270px;width:27px;height:26px"></div>
<div class="btn" style="left:1880px;top:301px;width:27px;height:27px"></div>
<div class="btn" style="left:1880px;top:359px;width:27px;height:26px"></div>
<div class="btn" style="left:1880px;top:389px;width:27px;height:27px"></div>
<svg class="a" style="left:1883.5px;top:273px" width="20" height="20" viewBox="1883.5 273 20 20">
<defs><radialGradient id="zg1" cx="0.35" cy="0.3" r="0.8"><stop offset="0" stop-color="#f4fcff"/><stop offset="0.5" stop-color="#c0e8ff"/><stop offset="1" stop-color="#88c0f0"/></radialGradient></defs>
<circle cx="1893.5" cy="283" r="7.8" fill="url(#zg1)" stroke="#8c8cd8" stroke-width="1"/><path d="M1890.0 283H1897.0M1893.5 279.5V286.5" stroke="#1a5cc0" stroke-width="2"/></svg><svg class="a" style="left:1883.5px;top:304.5px" width="20" height="20" viewBox="1883.5 304.5 20 20">
<defs><radialGradient id="zg2" cx="0.35" cy="0.3" r="0.8"><stop offset="0" stop-color="#f4fcff"/><stop offset="0.5" stop-color="#c0e8ff"/><stop offset="1" stop-color="#88c0f0"/></radialGradient></defs>
<circle cx="1893.5" cy="314.5" r="7.8" fill="url(#zg2)" stroke="#8c8cd8" stroke-width="1"/><path d="M1890.0 314.5H1897.0" stroke="#1a5cc0" stroke-width="2"/></svg><svg class="a" style="left:1883.5px;top:362px" width="20" height="20" viewBox="1883.5 362 20 20">
<defs><radialGradient id="zg3" cx="0.35" cy="0.3" r="0.8"><stop offset="0" stop-color="#f4fcff"/><stop offset="0.5" stop-color="#c0e8ff"/><stop offset="1" stop-color="#88c0f0"/></radialGradient></defs>
<circle cx="1893.5" cy="372" r="7.8" fill="url(#zg3)" stroke="#8c8cd8" stroke-width="1"/><path d="M1890.0 372H1897.0M1893.5 368.5V375.5" stroke="#1a5cc0" stroke-width="2"/></svg><svg class="a" style="left:1883.5px;top:392px" width="20" height="20" viewBox="1883.5 392 20 20">
<defs><radialGradient id="zg4" cx="0.35" cy="0.3" r="0.8"><stop offset="0" stop-color="#f4fcff"/><stop offset="0.5" stop-color="#c0e8ff"/><stop offset="1" stop-color="#88c0f0"/></radialGradient></defs>
<circle cx="1893.5" cy="402" r="7.8" fill="url(#zg4)" stroke="#8c8cd8" stroke-width="1"/><path d="M1890.0 402H1897.0" stroke="#1a5cc0" stroke-width="2"/></svg>

<!-- horizontal scrollbar -->
<div class="a track" style="left:240px;top:968px;width:1628px;height:21px"></div>
<div class="btn" style="left:240px;top:969px;width:17px;height:20px"><div class="a" style="left:4px;top:5px;border-top:4px solid transparent;border-bottom:4px solid transparent;border-right:4px solid #000"></div></div>
<div class="btn" style="left:1851px;top:969px;width:17px;height:20px"><div class="a" style="left:6px;top:5px;border-top:4px solid transparent;border-bottom:4px solid transparent;border-left:4px solid #000"></div></div>
<div class="btn" style="left:609px;top:969px;width:17px;height:20px"></div>

<!-- progress -->
<div class="a" style="left:240px;top:990px;width:1628px;height:17px;background:#fff;border:1px solid #000"></div>
<div class="a" style="left:241px;top:991px;width:893px;height:15px;background:#0000ff"></div>
<div class="t" style="left:1041px;top:993px;font-size:12px;font-weight:bold;color:#ffff00">55%</div>

<!-- bottom -->
<div class="btn" style="left:8px;top:983px;width:38px;height:38px"></div>
<div class="btn" style="left:48px;top:983px;width:38px;height:38px"></div>
<svg class="a" style="left:55px;top:992px" width="23" height="20" viewBox="55 992 23 20" shape-rendering="crispEdges">
<path d="M58 995h7v1h1v1h8v1h1v13h-17v-1h-1v-1h-1v-12h1v-1h1z" fill="#000"/>
<path d="M59 996h5v1h1v1h9v10h-15z" fill="#ffffc0"/>
<path d="M57.5 995.5" fill="none"/>
<path d="M58 994h7v1h-7zM57 995h1v1h-1z" fill="#000"/>
<path d="M58 996h1v12h-1z" fill="#000"/><path d="M74 1008v-10h2v12h-16v-2z" fill="#000"/>
</svg>
<div class="btn" style="left:88px;top:983px;width:38px;height:38px"></div>
<svg class="a" style="left:90px;top:985px" width="35" height="35" viewBox="90 985 35 35">
<defs><radialGradient id="gg" cx="0.5" cy="0.25" r="0.75"><stop offset="0" stop-color="#9fd8f8"/><stop offset="0.45" stop-color="#3a8fd0"/><stop offset="1" stop-color="#0a3570"/></radialGradient>
<radialGradient id="gs" cx="0.5" cy="0.5" r="0.5"><stop offset="0" stop-color="#5aa0d8"/><stop offset="1" stop-color="#5aa0d8" stop-opacity="0"/></radialGradient>
<linearGradient id="pg" x1="0" y1="0" x2="0" y2="1"><stop offset="0" stop-color="#f4f4f4"/><stop offset="0.5" stop-color="#d8d8d8"/><stop offset="1" stop-color="#eee"/></linearGradient></defs>
<ellipse cx="107.5" cy="1013" rx="11" ry="3" fill="url(#gs)"/>
<circle cx="107.5" cy="1000" r="13.5" fill="url(#gg)"/>
<path d="M104 992h9l2.5 2.5v15.5h-11.5z" fill="#e8e8e8"/>
<path d="M99.5 991.5h10l3.5 3.5v15.5h-13.5z" fill="url(#pg)"/>
<path d="M109.5 991.5v3.5h3.5" fill="none" stroke="#999" stroke-width="0.8"/>
</svg>
<div class="t serif" style="left:136px;top:969px;font-size:12.5px;line-height:15px">Сдвиг<br>по OY</div>
<div class="btn" style="left:176px;top:973px;width:27px;height:27px"></div>
<div class="btn" style="left:208px;top:973px;width:27px;height:27px"></div>
<svg class="a" style="left:179px;top:977px" width="20" height="20" viewBox="179 977 20 20">
<defs><linearGradient id="cg1" x1="0" y1="0" x2="1" y2="0"><stop offset="0" stop-color="#50d8ff"/><stop offset="0.35" stop-color="#1a78d8"/><stop offset="0.6" stop-color="#1a2fd0"/><stop offset="1" stop-color="#d0d8ff"/></linearGradient></defs>
<circle cx="189" cy="987" r="7.6" fill="url(#cg1)" stroke="#1c3a6a" stroke-width="1"/><path d="M189 981.5V991 M185 987 L189 991.5 L193 987" stroke="#f2f2f2" stroke-width="2.6" fill="none" stroke-linecap="square"/></svg><svg class="a" style="left:211px;top:977px" width="20" height="20" viewBox="211 977 20 20">
<defs><linearGradient id="cg2" x1="0" y1="0" x2="1" y2="0"><stop offset="0" stop-color="#50d8ff"/><stop offset="0.35" stop-color="#1a78d8"/><stop offset="0.6" stop-color="#1a2fd0"/><stop offset="1" stop-color="#d0d8ff"/></linearGradient></defs>
<circle cx="221" cy="987" r="7.6" fill="url(#cg2)" stroke="#1c3a6a" stroke-width="1"/><path d="M221 992.5V983 M217 987 L221 982.5 L225 987" stroke="#f2f2f2" stroke-width="2.6" fill="none" stroke-linecap="square"/></svg>
<div class="t serif" style="left:128px;top:1010px;font-size:16px">Device: Простой</div>
<div class="t serif" style="left:384px;top:1009px;font-size:15.4px">Ошибки:<span style="font-weight:normal">-/-</span></div>
<div class="btn" style="left:1872px;top:983px;width:38px;height:38px"></div>
<svg class="a" style="left:1874px;top:985px" width="34" height="34" viewBox="1874 985 34 34">
<defs><linearGradient id="dg" x1="0" y1="0" x2="1" y2="1"><stop offset="0" stop-color="#9a9ad0"/><stop offset="1" stop-color="#3c3c5c"/></linearGradient>
<linearGradient id="ag" x1="0" y1="0" x2="0" y2="1"><stop offset="0" stop-color="#ff3030"/><stop offset="1" stop-color="#b00000"/></linearGradient></defs>
<rect x="1882" y="987" width="20" height="26" fill="#000"/>
<rect x="1883" y="988" width="18" height="24" fill="url(#dg)"/>
<path d="M1889 994 L1902 988.5 V1012 L1890 1017.5 Z" fill="#000"/>
<path d="M1889 993.5 L1901 988.5 V1011 L1889.5 1016 Z" fill="#b08080"/>
<path d="M1876 997.5h6v-3.5l6.5 6.5-6.5 6.5v-3.5h-6z" fill="#000" transform="translate(0.8 0.8)"/>
<path d="M1876 997.5h6v-3.5l6.5 6.5-6.5 6.5v-3.5h-6z" fill="url(#ag)"/>
<path d="M1890.5 1004l2-1.5" stroke="#eee" stroke-width="1.2"/>
</svg>


</body></html>
